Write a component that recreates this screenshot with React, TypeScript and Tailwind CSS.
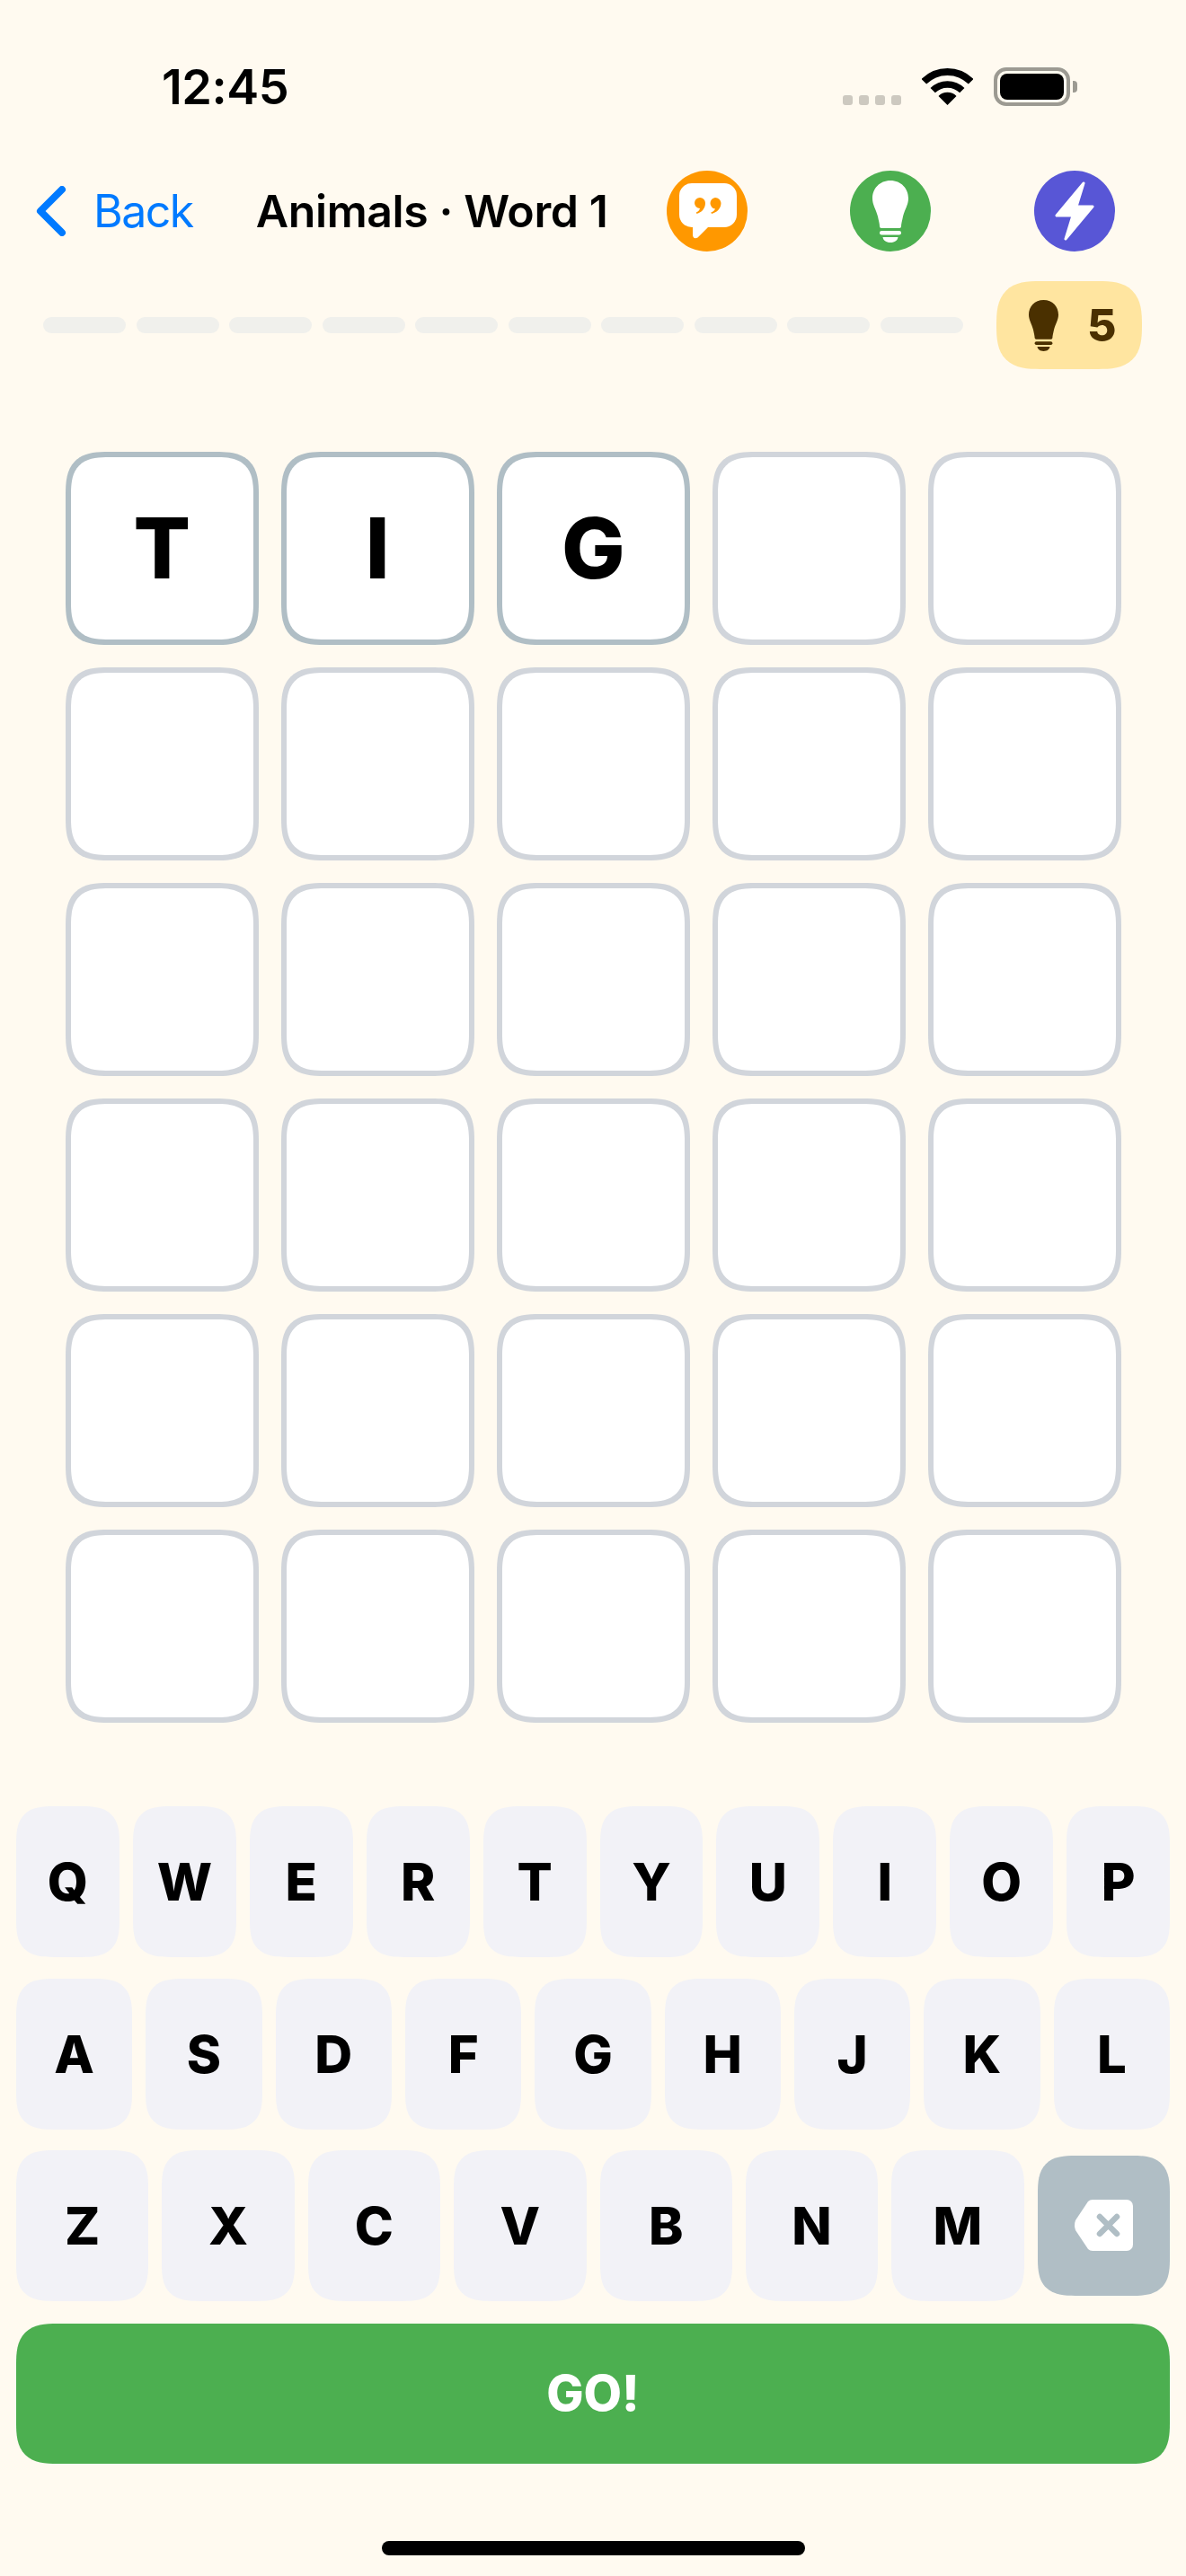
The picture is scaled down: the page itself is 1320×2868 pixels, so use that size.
import React from "react";

const ROWS = [
  ["Q", "W", "E", "R", "T", "Y", "U", "I", "O", "P"],
  ["A", "S", "D", "F", "G", "H", "J", "K", "L"],
  ["Z", "X", "C", "V", "B", "N", "M"],
];

const GRID = [
  ["T", "I", "G", "", ""],
  ["", "", "", "", ""],
  ["", "", "", "", ""],
  ["", "", "", "", ""],
  ["", "", "", "", ""],
  ["", "", "", "", ""],
];

const Bulb = ({ className }: { className: string }) => (
  <svg viewBox="25 10 40 69" className={className} fill="currentColor">
    <path d="M45 10C33 10 25 19 25 30C25 37 29 42 31 50C32 55 33 58 33 61Q33 63 35 63H55Q57 63 57 61C57 58 58 55 59 50C61 42 65 37 65 30C65 19 57 10 45 10Z" />
    <rect x="33" y="66" width="24" height="4.5" rx="2.2" />
    <path d="M36.5 73H53.5C53 76.5 50 79 45 79C40 79 37 76.5 36.5 73Z" />
  </svg>
);

const StatusBar = () => (
  <div className="h-[190px] flex items-start pl-[180px] pt-[70px]">
    <span className="text-[54px] leading-none font-semibold text-black tracking-[-0.5px]">12:45</span>
    <div className="ml-[617px] mt-[36px] flex gap-[7px]">
      <div className="w-[11px] h-[11px] rounded-[3px] bg-[#cdc9c0]" />
      <div className="w-[11px] h-[11px] rounded-[3px] bg-[#cdc9c0]" />
      <div className="w-[11px] h-[11px] rounded-[3px] bg-[#cdc9c0]" />
      <div className="w-[11px] h-[11px] rounded-[3px] bg-[#cdc9c0]" />
    </div>
    <svg viewBox="0 0 57 42" className="ml-[23px] mt-[5px] w-[57px] h-[42px]" fill="none" stroke="#000">
      <path d="M2.3 15.8A37 37 0 0 1 54.7 15.8" strokeWidth="8" />
      <path d="M12.2 25.7A23 23 0 0 1 44.8 25.7" strokeWidth="7.5" />
      <path d="M28.5 42L18.5 32A14 14 0 0 1 38.5 32Z" fill="#000" stroke="none" />
    </svg>
    <div className="ml-[23px] mt-[5px] w-[85px] h-[43px] rounded-[14px] border-[4px] border-[#9c9a92] p-[3px]">
      <div className="w-full h-full rounded-[8px] bg-black" />
    </div>
    <div className="ml-[3px] mt-[20px] w-[5px] h-[13px] rounded-r-[4px] bg-[#9c9a92]" />
  </div>
);

const NavBar = () => (
  <div className="h-[90px] flex items-center pl-[40px]">
    <svg viewBox="0 0 34 56" className="w-[34px] h-[56px]" fill="none" stroke="#007aff" strokeWidth="8" strokeLinecap="round" strokeLinejoin="round">
      <path d="M29 4L5 28L29 52" />
    </svg>
    <span className="ml-[30px] text-[50px] leading-none text-[#007aff] tracking-[-1.5px]">Back</span>
    <span className="ml-[70px] text-[50px] leading-none font-semibold text-black tracking-[-0.4px]">Animals · Word 1</span>
    <div className="ml-[65px] w-[90px] h-[90px] rounded-full bg-[#ff9800]">
      <svg viewBox="0 0 90 90" className="w-[90px] h-[90px]">
        <path d="M28 14H64A14 14 0 0 1 78 28V49A14 14 0 0 1 64 63H46L34.5 74.5Q30 77 29 72V63H28A14 14 0 0 1 14 49V28A14 14 0 0 1 28 14Z" fill="#fff" />
        <path d="M37 30A6 6 0 0 1 43 36C43 42 39 46.500 33.500 48L32.800 46.500C35 45.500 36.500 44 37 42A6 6 0 0 1 37 30Z" fill="#ff9800" />
        <path d="M54 30A6.500 6.500 0 0 1 60.500 36C60.500 42 56 46.500 50 48L49.300 46.500C52 45.500 53.500 44 54 42.500A6.300 6.300 0 0 1 54 30Z" fill="#ff9800" />
      </svg>
    </div>
    <div className="ml-[114px] w-[90px] h-[90px] rounded-full bg-[#4caf50] flex items-center justify-center">
      <Bulb className="w-[40px] h-[69px] text-white" />
    </div>
    <div className="ml-[115px] w-[90px] h-[90px] rounded-full bg-[#5856d6]">
      <svg viewBox="0 0 90 90" className="w-[90px] h-[90px]" fill="#fff" stroke="#fff" strokeWidth="3" strokeLinejoin="round">
        <path d="M55 14L25 50H43L35 76L65 40H47Z" />
      </svg>
    </div>
  </div>
);

const ProgressRow = () => (
  <div className="mt-[33px] h-[98px] flex items-center pl-[48px]">
    <div className="w-[1024px] flex gap-[11.5px]">
      {Array.from({ length: 10 }).map((_, i) => (
        <div key={i} className="flex-1 h-[18px] rounded-full bg-[#f0f0ec]" />
      ))}
    </div>
    <div className="ml-[37px] w-[162px] h-[98px] rounded-[49px] [corner-shape:superellipse(1.5)] bg-[#ffe5a0] flex items-center pl-[36px] text-[#4a3000]">
      <Bulb className="w-[33px] h-[59px]" />
      <span className="ml-[32px] text-[50px] leading-none font-extrabold">5</span>
    </div>
  </div>
);

const Board = () => (
  <div className="mt-[92px] ml-[73px] grid grid-cols-[repeat(5,214.500px)] auto-rows-[214.500px] gap-[25.500px]">
    {GRID.flat().map((ch, i) => (
      <div
        key={i}
        className={
          ch
            ? "rounded-[48px] [corner-shape:superellipse(1.5)] border-[6px] border-[#b0bec5] bg-white flex items-center justify-center text-[94px] leading-none font-extrabold text-black"
            : "rounded-[48px] [corner-shape:superellipse(1.5)] border-[6px] border-[#d1d5db] bg-white"
        }
      >
        {ch}
      </div>
    ))}
  </div>
);

const Key = ({ label }: { label: string }) => (
  <div className="flex-1 h-[168px] rounded-[42px] [corner-shape:superellipse(1.5)] bg-[#f2f2f7] flex items-center justify-center text-[58px] leading-none font-extrabold text-black">
    {label}
  </div>
);

const Keyboard = () => (
  <div className="mt-[93px] px-[18px] flex flex-col">
    <div className="flex gap-[15px]">
      {ROWS[0].map((k) => (
        <Key key={k} label={k} />
      ))}
    </div>
    <div className="mt-[24px] flex gap-[15px]">
      {ROWS[1].map((k) => (
        <Key key={k} label={k} />
      ))}
    </div>
    <div className="mt-[23px] flex gap-[15px] items-center">
      {ROWS[2].map((k) => (
        <Key key={k} label={k} />
      ))}
      <div className="flex-1 h-[156px] rounded-[42px] [corner-shape:superellipse(1.5)] bg-[#b0bec5] flex items-center justify-center">
        <svg viewBox="0 0 66 57" className="w-[66px] h-[57px]">
          <path d="M21 0H59A7 7 0 0 1 66 7V50A7 7 0 0 1 59 57H21Q18 57 16 55L2 34Q0 28.500 2 23L16 2Q18 0 21 0Z" fill="#fff" />
          <path d="M29 19L48 38M48 19L29 38" stroke="#b0bec5" strokeWidth="6.500" strokeLinecap="round" />
        </svg>
      </div>
    </div>
    <div className="mt-[25px] h-[156px] rounded-[46px] [corner-shape:superellipse(1.5)] bg-[#4caf50] flex items-center justify-center text-[55px] leading-none font-extrabold text-white">
      GO!
    </div>
  </div>
);

export default function App() {
  return (
    <div className="w-[1320px] h-[2868px] bg-[#fffaf0] overflow-hidden font-['Inter',sans-serif]">
      <StatusBar />
      <NavBar />
      <ProgressRow />
      <Board />
      <Keyboard />
      <div className="mt-[86px] mx-auto w-[471px] h-[16px] rounded-full bg-black" />
    </div>
  );
}
